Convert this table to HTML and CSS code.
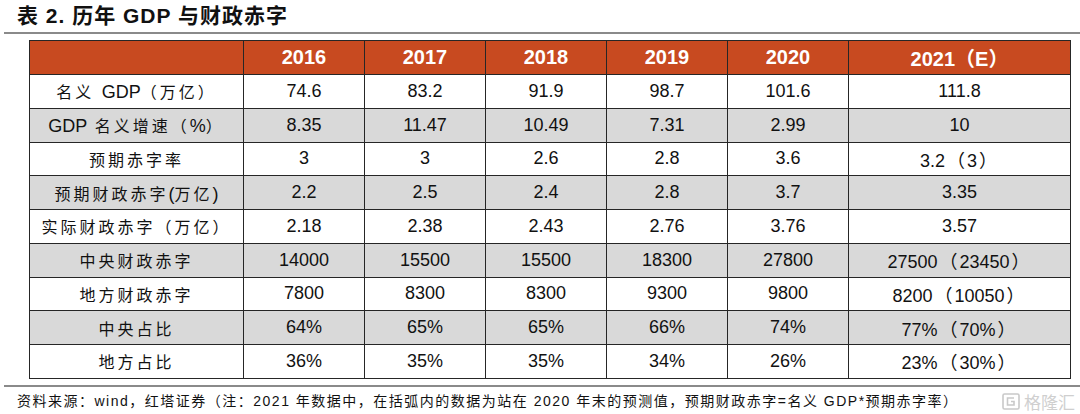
FILE: index.html
```html
<!DOCTYPE html>
<html lang="zh-CN">
<head>
<meta charset="utf-8">
<title>表 2. 历年 GDP 与财政赤字</title>
<link rel="stylesheet" href="styles.css">
</head>
<body>
<div class="page">
  <h1 class="title">表 2. 历年 GDP 与财政赤字</h1>
  <div class="rule"></div>
  <table class="data">
    <colgroup>
      <col class="c-label"><col class="c-year"><col class="c-year"><col class="c-year"><col class="c-year"><col class="c-year"><col class="c-last">
    </colgroup>
    <thead>
      <tr class="head">
        <th></th><th>2016</th><th>2017</th><th>2018</th><th>2019</th><th>2020</th><th>2021（E）</th>
      </tr>
    </thead>
    <tbody>
      <tr><td class="lbl">名义 <span class="lat">GDP</span>（万亿）</td><td>74.6</td><td>83.2</td><td>91.9</td><td>98.7</td><td>101.6</td><td>111.8</td></tr>
      <tr class="alt"><td class="lbl"><span class="lat">GDP</span> 名义增速（<span class="lat">%</span>）</td><td>8.35</td><td>11.47</td><td>10.49</td><td>7.31</td><td>2.99</td><td>10</td></tr>
      <tr><td class="lbl">预期赤字率</td><td>3</td><td>3</td><td>2.6</td><td>2.8</td><td>3.6</td><td>3.2<span class="par">（</span>3<span class="par">）</span></td></tr>
      <tr class="alt"><td class="lbl">预期财政赤字<span class="lat">(</span>万亿<span class="lat">)</span></td><td>2.2</td><td>2.5</td><td>2.4</td><td>2.8</td><td>3.7</td><td>3.35</td></tr>
      <tr><td class="lbl">实际财政赤字（万亿）</td><td>2.18</td><td>2.38</td><td>2.43</td><td>2.76</td><td>3.76</td><td>3.57</td></tr>
      <tr class="alt"><td class="lbl">中央财政赤字</td><td>14000</td><td>15500</td><td>15500</td><td>18300</td><td>27800</td><td>27500<span class="par">（</span>23450<span class="par">）</span></td></tr>
      <tr><td class="lbl">地方财政赤字</td><td>7800</td><td>8300</td><td>8300</td><td>9300</td><td>9800</td><td>8200<span class="par">（</span>10050<span class="par">）</span></td></tr>
      <tr class="alt"><td class="lbl">中央占比</td><td>64%</td><td>65%</td><td>65%</td><td>66%</td><td>74%</td><td>77%<span class="par">（</span>70%<span class="par">）</span></td></tr>
      <tr><td class="lbl">地方占比</td><td>36%</td><td>35%</td><td>35%</td><td>34%</td><td>26%</td><td>23%<span class="par">（</span>30%<span class="par">）</span></td></tr>
    </tbody>
  </table>
  <div class="rule rule-bottom"></div>
  <p class="note">资料来源：wind，红塔证券（注：2021 年数据中，在括弧内的数据为站在 2020 年末的预测值，预期财政赤字=名义 GDP*预期赤字率）</p>
  <div class="watermark">
    <svg class="wm-icon" width="18" height="17" viewBox="0 0 18 17" aria-hidden="true">
      <rect x="1" y="1" width="16" height="15" rx="1.5" fill="none" stroke="#c9c9c9" stroke-width="1.6"/>
      <path d="M12 5 H5.5 V12 H12 V8.5 H9" fill="none" stroke="#c9c9c9" stroke-width="1.6"/>
    </svg>
    <span class="wm-text">格隆汇</span>
  </div>
</div>
</body>
</html>
```
FILE: styles.css
```css
html, body {
  margin: 0;
  padding: 0;
  background: #ffffff;
}

.page {
  position: relative;
  width: 1080px;
  height: 414px;
  overflow: hidden;
  font-family: "Liberation Sans", "Noto Sans CJK SC", sans-serif;
  color: #111;
}

.title {
  margin: 0;
  height: 32px;
  padding-left: 17px;
  font-size: 21px;
  line-height: 32px;
  font-weight: bold;
  letter-spacing: 1px;
  word-spacing: 0;
  color: #111;
}

.rule {
  margin-left: 4px;
  height: 2px;
  background: #8a8a8a;
}

.data {
  margin: 6px 0 0 29px;
  border-collapse: collapse;
  table-layout: fixed;
  width: 1022px;
}

.c-label { width: 214px; }
.c-year { width: 121px; }
.c-last { width: 222px; }

.data th,
.data td {
  border: 1px solid #262626;
  padding: 0;
  text-align: center;
  vertical-align: middle;
  white-space: nowrap;
  overflow: hidden;
}

.head {
  height: 34px;
  background: #c84a20;
}

.head th {
  color: #ffffff;
  font-size: 20px;
  font-weight: bold;
}

.data tbody tr {
  height: 33.75px;
}

.data td {
  font-size: 18px;
  color: #111;
}

.data tr.alt {
  background: #d9d9d9;
}

.data td.lbl {
  font-size: 16px;
  letter-spacing: 3px;
}

.data td.lbl .lat {
  font-size: 18px;
  letter-spacing: 0;
}

.par {
  margin: 0 2px;
}

.rule-bottom {
  margin-top: 6px;
}

.note {
  margin: 0;
  padding-left: 17px;
  height: 28px;
  line-height: 28px;
  font-size: 14px;
  letter-spacing: 1.5px;
  color: #111;
  white-space: nowrap;
}

.watermark {
  position: absolute;
  right: 5px;
  bottom: 3px;
  display: flex;
  align-items: center;
  gap: 4px;
}

.wm-icon {
  display: block;
}

.wm-text {
  font-family: "Noto Sans CJK SC", sans-serif;
  font-size: 17px;
  line-height: 19px;
  color: #cfcfcf;
  letter-spacing: 0;
}
```
